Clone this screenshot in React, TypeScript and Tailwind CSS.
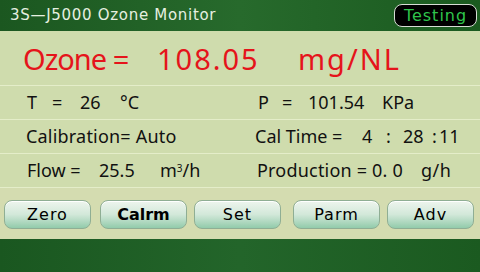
import React from 'react';

const buttons = [
  { label: 'Zero', gap: '' },
  { label: 'Calrm', gap: 'ml-[9px]' },
  { label: 'Set', gap: 'ml-[7px]' },
  { label: 'Parm', gap: 'ml-[12px]' },
  { label: 'Adv', gap: 'ml-[7px]' },
];

const Row: React.FC<{ left: React.ReactNode; right: React.ReactNode }> = ({ left, right }) => (
  <div className="flex h-[34px] items-center border-b border-[#e4edc9]">
    <div className="flex w-[255px] items-center pl-[26px]">{left}</div>
    <div className="flex flex-1 items-center">{right}</div>
  </div>
);

export default function App() {
  return (
    <div className="flex h-[272px] w-[480px] flex-col overflow-hidden bg-[#cfdcad] font-['Noto_Sans',sans-serif] text-[#111]">
      {/* header */}
      <div className="flex h-[31px] items-center justify-between bg-gradient-to-r from-[#1b5720] via-[#276a2c] to-[#1a5a1f] pl-[10px] pr-[3px]">
        <span className="font-['DejaVu_Sans',sans-serif] text-[15px] tracking-[0.7px] text-[#e6f0e0]">
          3S—J5000 Ozone Monitor
        </span>
        <span className="flex h-[23px] w-[83px] items-center justify-center rounded-[8px] border-[1.5px] border-[#d6ddd4] bg-black font-['DejaVu_Sans',sans-serif] text-[16px] tracking-[1px] text-[#2fc44c]">
          Testing
        </span>
      </div>

      {/* ozone */}
      <div className="flex h-[55px] items-center border-b border-[#e4edc9] pl-[23px] pt-[1px] text-[29px] text-[#e5141b]">
        <span className="w-[134px] tracking-[-1px]">Ozone =</span>
        <span className="w-[141px] tracking-[2px]">108.05</span>
        <span className="tracking-[2px]">mg/NL</span>
      </div>

      <div className="text-[18px]">
        <Row
          left={
            <>
              <span className="w-[26px] pl-[1px]">T</span>
              <span className="w-[28px]">=</span>
              <span className="w-[40px]">26</span>
              <span>°C</span>
            </>
          }
          right={
            <>
              <span className="w-[27px] pl-[3px]">P</span>
              <span className="w-[26px]">=</span>
              <span className="w-[74px]">101.54</span>
              <span>KPa</span>
            </>
          }
        />
        <Row
          left={<span className="tracking-[0.2px]">Calibration= Auto</span>}
          right={
            <>
              <span className="w-[107px]">Cal Time =</span>
              <span className="w-[24px]">4</span>
              <span className="w-[17px]">:</span>
              <span className="w-[29px]">28</span>
              <span className="w-[7px]">:</span>
              <span>11</span>
            </>
          }
        />
        <Row
          left={
            <>
              <span className="w-[73px] pl-[1px]">Flow =</span>
              <span className="w-[61px]">25.5</span>
              <span>
                m<sup className="text-[10px]">3</sup>/h
              </span>
            </>
          }
          right={
            <>
              <span className="pl-[2px] tracking-[0.2px]">Production = 0. 0</span>
              <span className="ml-[18px] tracking-[0.5px]">g/h</span>
            </>
          }
        />
      </div>

      {/* buttons */}
      <div className="flex h-[51px] bg-[#d4dcb0] px-[4px] pt-[12px]">
        {buttons.map((b) => (
          <button
            key={b.label}
            className={`flex h-[29px] w-[87px] items-center justify-center rounded-[8px] border border-[#8fae94] bg-gradient-to-b from-[#eef5ee] via-[#d2e8d9] to-[#92cbab] pt-[1px] shadow-[inset_0_1px_0_#ffffff] font-['DejaVu_Sans',sans-serif] text-[16px] text-black ${b.gap} ${
              b.label === 'Calrm' ? 'font-bold' : 'tracking-[1px]'
            }`}
          >
            {b.label}
          </button>
        ))}
      </div>

      {/* footer */}
      <div className="h-[33px] bg-gradient-to-r from-[#1a5720] via-[#23652a] to-[#1b5a20]" />
    </div>
  );
}
